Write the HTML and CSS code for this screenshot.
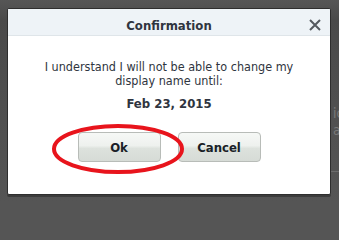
FILE: index.html
```html
<!DOCTYPE html>
<html>
<head>
<meta charset="utf-8">
<link rel="stylesheet" href="styles.css">
</head>
<body>
<div class="backdrop">
  <div class="bg-text">
    <span class="bg-line">ic</span>
    <span class="bg-line">ac</span>
  </div>
  <div class="bg-rule"></div>
  <div class="dialog">
    <div class="header">
      <div class="title">Confirmation</div>
      <svg class="close" width="12" height="12" viewBox="0 0 12 12"><path d="M1 1 L11 11 M11 1 L1 11" stroke="#555a60" stroke-width="2" fill="none"/></svg>
    </div>
    <div class="body">
      <p class="msg">I understand I will not be able to change my<br>display name until:</p>
      <p class="date">Feb 23, 2015</p>
      <div class="buttons">
        <button class="btn">Ok</button>
        <button class="btn">Cancel</button>
      </div>
    </div>
  </div>
  <svg class="circle" width="140" height="56" viewBox="0 0 140 56"><ellipse cx="68" cy="25" rx="64" ry="23" fill="none" stroke="#e8141c" stroke-width="4"/></svg>
</div>
</body>
</html>
```
FILE: styles.css
```css
html {
  background: #555;
}
html, body {
  margin: 0;
  padding: 0;
}
body {
  width: 339px;
  height: 203px;
  overflow: hidden;
  font-family: "DejaVu Sans Condensed", "DejaVu Sans", sans-serif;
}
.backdrop {
  position: relative;
  width: 339px;
  height: 203px;
  background: linear-gradient(to bottom, #565656 0px, #4a4a4a 20px, #505050 120px, #555 203px);
  padding: 8px 0 0 7px;
  box-sizing: border-box;
}
.bg-text {
  position: absolute;
  left: 333px;
  top: 105px;
  font-size: 14px;
  color: #7a7a7a;
  line-height: 17px;
}
.bg-line { display: block; }
.bg-rule {
  position: absolute;
  left: 331px;
  top: 171px;
  width: 8px;
  height: 1px;
  background: #6c6c6c;
}
.dialog {
  width: 322px;
  height: 185px;
  background: #fff;
  border: 1px solid #2e2e2e;
  border-radius: 2px;
  overflow: hidden;
  box-shadow: 0 2px 0 #3c3c3c;
}
.header {
  height: 26px;
  background: #eef3f7;
  border-bottom: 1px solid #dfe5e9;
  display: flex;
  align-items: center;
  justify-content: center;
  position: relative;
}
.title {
  font-weight: bold;
  font-size: 13px;
  color: #2f3540;
  margin-top: 6px;
}
.close {
  position: absolute;
  right: 9px;
  top: 10px;
}
.body {
  text-align: center;
  color: #2f3540;
  font-size: 12.5px;
}
.msg {
  margin: 24px 0 0 0;
  line-height: 14px;
}
.date {
  margin: 8px 0 0 0;
  font-weight: bold;
  font-size: 13px;
  line-height: 16px;
}
.buttons {
  display: flex;
  justify-content: center;
  gap: 17px;
  margin-top: 20px;
}
.btn {
  width: 83px;
  height: 30px;
  border: 1px solid #b8bcb8;
  border-radius: 4px;
  background: linear-gradient(to bottom, #f6f8f6 0%, #eef1ee 45%, #dde2dd 55%, #d6dbd6 100%);
  font-family: "DejaVu Sans Condensed", "DejaVu Sans", sans-serif;
  font-weight: bold;
  font-size: 13px;
  color: #1a1f28;
  padding: 0;
}
.circle {
  position: absolute;
  left: 50px;
  top: 124px;
}
```
